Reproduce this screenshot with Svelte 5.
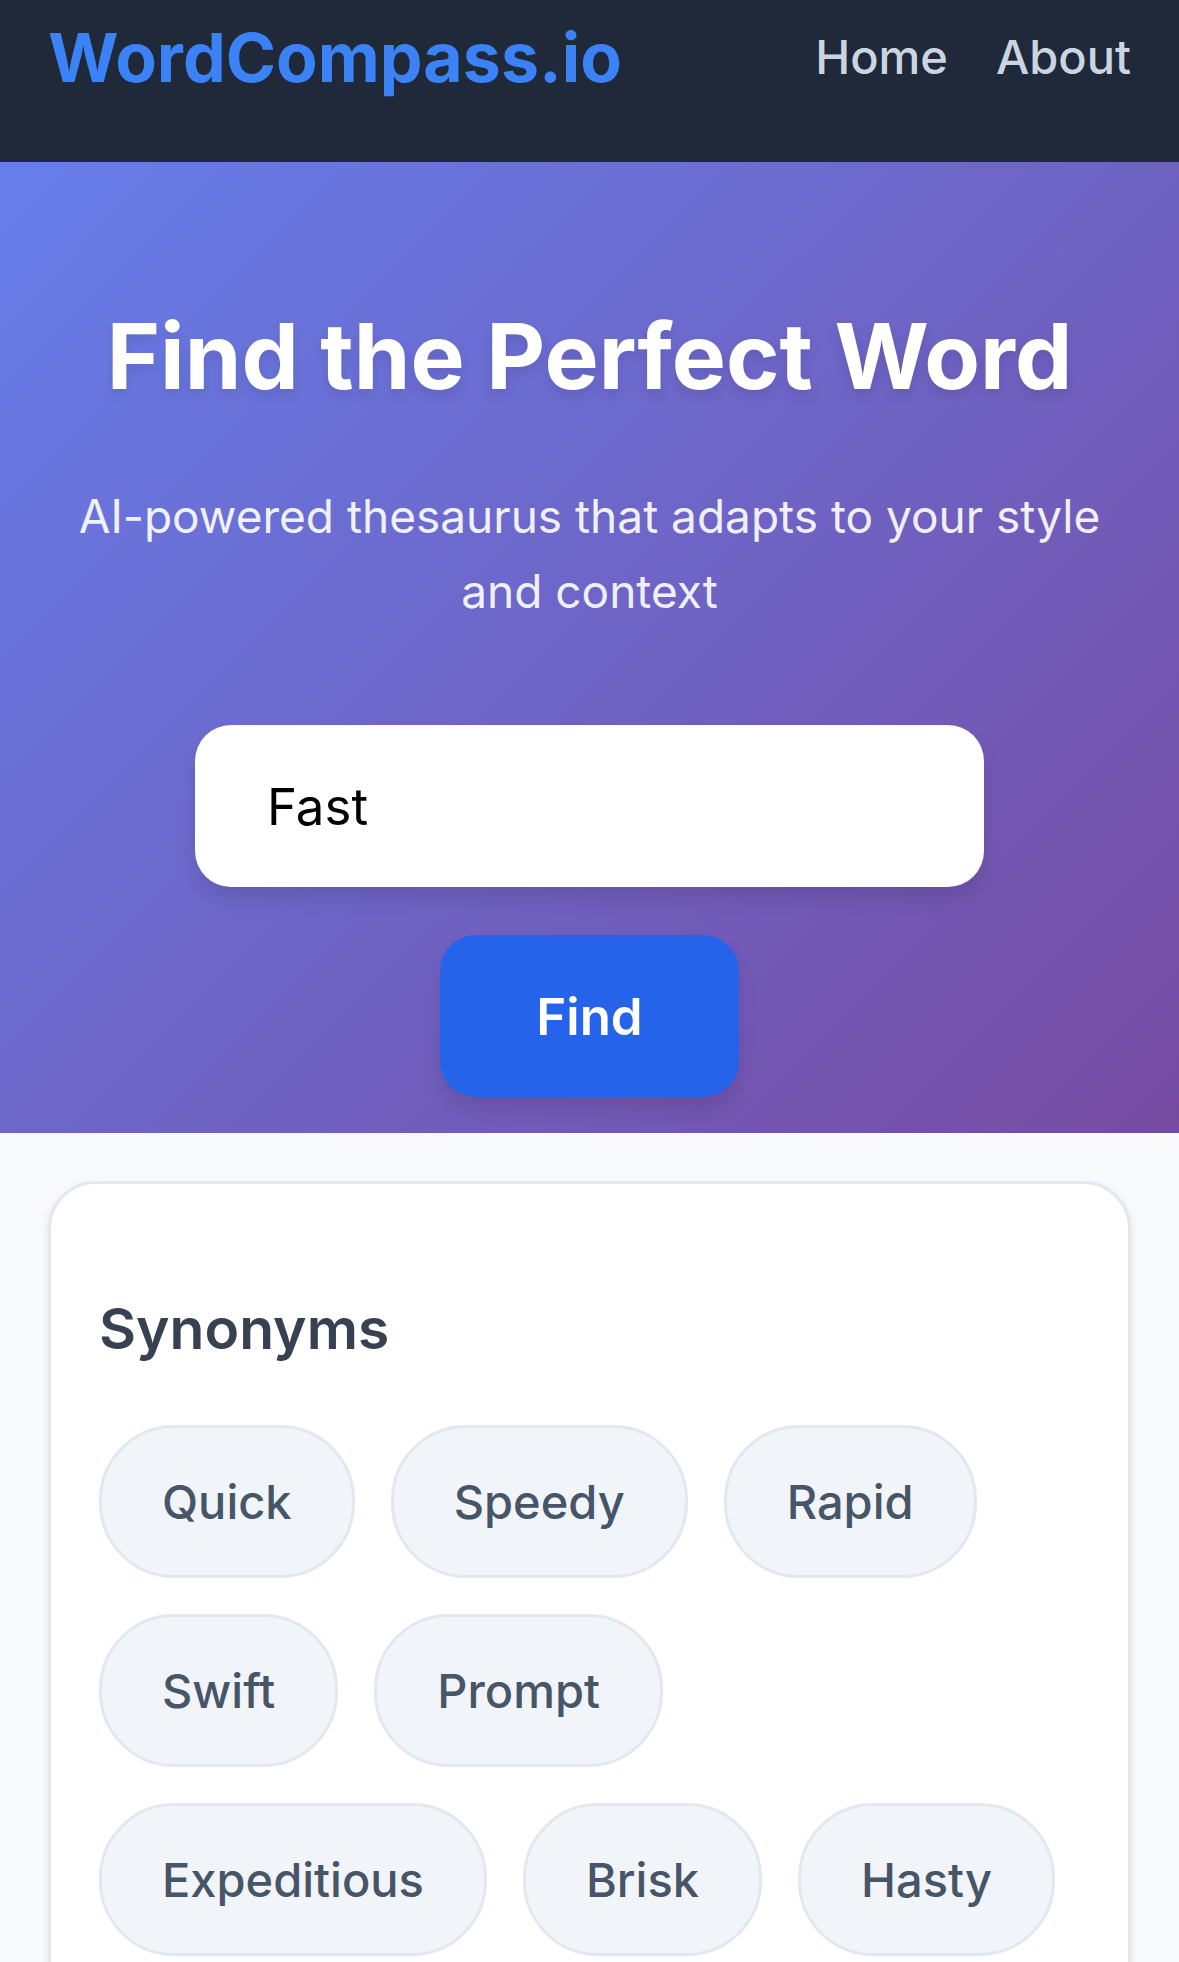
<script>
  let query = $state('Fast');
  const synonyms = ['Quick', 'Speedy', 'Rapid', 'Swift', 'Prompt', 'Expeditious', 'Brisk', 'Hasty'];
</script>

<header class="site-header">
  <a class="logo" href="#home">WordCompass.io</a>
  <nav class="nav" aria-label="Main">
    <a href="#home">Home</a>
    <a href="#about">About</a>
  </nav>
</header>

<section class="hero">
  <h1>Find the Perfect Word</h1>
  <p>AI-powered thesaurus that adapts to your style and context</p>
  <form class="search" onsubmit={(e) => e.preventDefault()}>
    <input type="text" aria-label="Word to look up" bind:value={query} />
    <button type="submit">Find</button>
  </form>
</section>

<main>
  <section class="card">
    <h2>Synonyms</h2>
    <div class="chips">
      {#each synonyms as word}
        <button type="button" class="chip">{word}</button>
      {/each}
    </div>
  </section>
</main>

<style>
  :global(body) {
    margin: 0;
    background: #f9fafc;
    font-family: Inter, 'Liberation Sans', sans-serif;
    font-size: 48px;
    color: #374151;
    overflow-x: hidden;
  }
  .site-header {
    display: flex;
    justify-content: space-between;
    align-items: center;
    padding: 0 48px 48px;
    background: #1f293a;
  }
  .logo {
    color: #3b82f6;
    font-size: 68px;
    line-height: 114px;
    font-weight: 700;
    text-decoration: none;
  }
  .nav {
    display: flex;
    gap: 48px;
  }
  .nav a {
    color: #cbd5e1;
    font-size: 47px;
    line-height: 76px;
    font-weight: 500;
    text-decoration: none;
  }
  .hero {
    padding: 144px 48px 36px;
    background: linear-gradient(135deg, #667eea 0%, #764ba2 100%);
    text-align: center;
  }
  h1 {
    margin: 0 0 72px;
    color: #fff;
    font-size: 91px;
    line-height: 101px;
    font-weight: 700;
    text-shadow: 0 6px 12px rgba(0, 0, 0, 0.1);
  }
  .hero p {
    margin: 0 0 96px;
    color: #fff;
    font-size: 46px;
    line-height: 75px;
    opacity: 0.9;
  }
  .search {
    display: flex;
    flex-direction: column;
    align-items: center;
    gap: 48px;
  }
  .search input,
  .search button {
    box-sizing: border-box;
    height: 162px;
    border: 0;
    border-radius: 36px;
    font: inherit;
    font-size: 51px;
    box-shadow: 0 12px 18px rgba(0, 0, 0, 0.1);
  }
  .search input {
    width: 100%;
    max-width: 789px;
    padding: 0 72px;
    background: #fff;
    color: #000;
    outline: none;
  }
  .search button {
    padding: 0 96px;
    background: #2563eb;
    color: #fff;
    font-weight: 600;
  }
  main {
    padding: 48px;
  }
  .card {
    padding: 96px 48px;
    border: 3px solid #e2e8f0;
    border-radius: 48px;
    background: #fff;
    box-shadow: 0 3px 9px rgba(0, 0, 0, 0.1);
  }
  h2 {
    margin: 0 0 48px;
    color: #374151;
    font-size: 57px;
    line-height: 97px;
    font-weight: 600;
  }
  .chips {
    display: flex;
    flex-wrap: wrap;
    gap: 36px;
  }
  .chip {
    padding: 36px 60px;
    border: 3px solid #e2e8f0;
    border-radius: 75px;
    background: #f1f5f9;
    color: #475569;
    font: inherit;
    font-size: 47px;
    line-height: 75px;
    font-weight: 500;
  }
</style>
